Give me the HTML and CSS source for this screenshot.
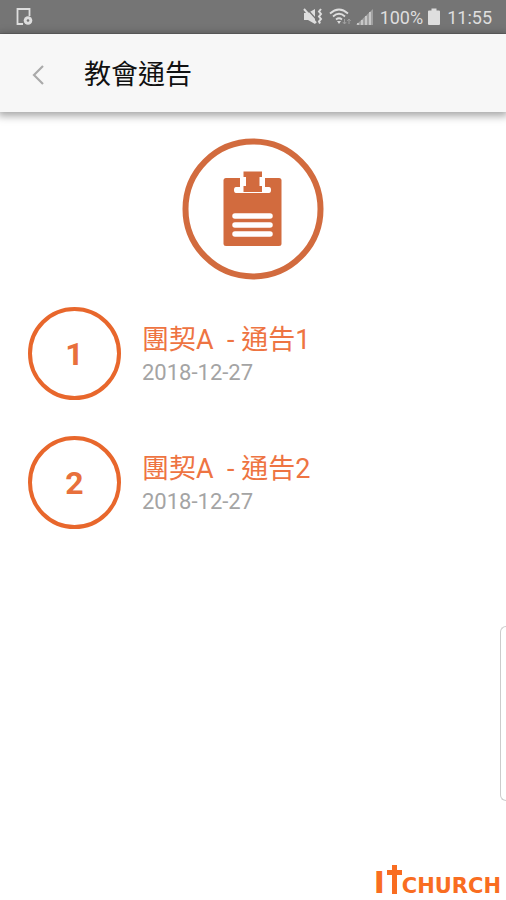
FILE: index.html
```html
<!DOCTYPE html>
<html lang="zh-Hant">
	<head>
		<meta charset="utf-8">
		<meta name="viewport" content="width=device-width, initial-scale=1">
		<title>教會通告</title>
		<link rel="stylesheet" href="styles.css">
	</head>
	<body>
		<div class="status">
			<svg class="status-note" width="18" height="18" viewBox="0 0 18 18">
				<path d="M7 16H1.500V1H13.500V8" fill="none" stroke="currentColor" stroke-width="1.800"/>
				<circle cx="12" cy="12.500" r="4.300" fill="currentColor"/>
				<circle cx="12" cy="12.500" r="1.300" fill="#757575"/>
			</svg>
			<svg width="20" height="18" viewBox="0 0 20 18">
				<path d="M1 5h4l7-4v15l-7-4H1z" fill="currentColor"/>
				<path d="M4 1l10 11" stroke="#757575" stroke-width="1.200"/>
				<path d="M1 1l12 14" stroke="currentColor" stroke-width="2"/>
				<path d="M18 1l-2 2.500 2 2.500-2 2.500 2 2.500-2 2.500 1 2" fill="none" stroke="currentColor" stroke-width="2"/>
			</svg>
			<svg class="status-wifi" width="23" height="18" viewBox="0 0 23 18">
				<path d="M1 5.500Q10 -2.500 19 5.500M4 8.500Q10 3 16 8.500M7 11.500Q10 9 13 11.500" fill="none" stroke="currentColor" stroke-width="1.800"/>
				<path d="M8 13h4l-2 3z" fill="currentColor"/>
				<path d="M15.500 11v5M13.800 14l1.700 2 1.700-2M20 16v-5M18.300 13l1.700-2 1.700 2" fill="none" stroke="#a0a0a0" stroke-width="1"/>
			</svg>
			<svg width="17" height="18" viewBox="0 0 17 18">
				<path d="M0 17L17 1V17z" fill="#a0a0a0"/>
				<path d="M2 17v-2M6 17v-5M10 17v-9M14 17V4" stroke="#c8c8c8" stroke-width="2"/>
			</svg>
			<span class="status-text battery-text">100%</span>
			<svg width="12" height="18" viewBox="0 0 12 18">
				<path d="M3.500 0.500h5v2H11q1 0 1 1V16q0 1-1 1H1q-1 0-1-1V3.500q0-1 1-1h2.500z" fill="currentColor"/>
			</svg>
			<span class="status-text time">11:55</span>
		</div>
		<header class="header">
			<button class="back" type="button" aria-label="返回">
				<svg width="12" height="20" viewBox="0 0 12 20">
					<path d="M11 1L2 10l9 9" fill="none" stroke="#aaa" stroke-width="2.200"/>
				</svg>
			</button>
			<h1 class="title">教會通告</h1>
		</header>
		<main class="main">
			<svg class="board" width="142" height="142" viewBox="0 0 142 142">
				<circle cx="71" cy="71" r="67.500" fill="#fff" stroke="#d26b3e" stroke-width="6"/>
				<rect x="41.500" y="40" width="58" height="68" rx="2.500" fill="#d26b3e"/>
				<path d="M58 38V49H54q-2 0-2 3t2 3H87q2 0 2-3t-2-3H83V38z" fill="#fff"/>
				<path d="M61.500 33.500H80V39H77.500V48H80V54H61.500V48H64V39H61.500z" fill="#d26b3e"/>
				<path d="M53 78H88M53 87H88M53 96H88" stroke="#fff" stroke-width="5.500" stroke-linecap="round"/>
			</svg>
			<ul class="list">
				<li class="item">
					<div class="num">1</div>
					<div class="info">
						<a class="name" href="#">團契A&nbsp; - 通告1</a>
						<p class="date">2018-12-27</p>
					</div>
				</li>
				<li class="item">
					<div class="num">2</div>
					<div class="info">
						<a class="name" href="#">團契A&nbsp; - 通告2</a>
						<p class="date">2018-12-27</p>
					</div>
				</li>
			</ul>
		</main>
		<!-- 右側抽屜 -->
		<div class="drawer"></div>
		<footer class="footer">
			<span class="logo-i">I</span>
			<svg width="15" height="29" viewBox="0 0 15 29">
				<path d="M5 0h5v5h5v5h-5v19H5V10H0V5h5z" fill="#f96d21"/>
			</svg>
			<span class="logo-text">CHURCH</span>
		</footer>
	</body>
</html>
```
FILE: styles.css
```css
*{
	margin: 0;
	padding: 0;
	box-sizing: border-box;
}
body{
	min-height: 100vh;
	display: flex;
	flex-direction: column;
	background: #fff;
	font-family: Roboto, "Noto Sans CJK TC", sans-serif;
}
.status{
	height: 34px;
	padding: 0 14px 0 16px;
	display: flex;
	align-items: center;
	background: #757575;
	border-bottom: 1px solid #666;
	color: #dedede;
}
.status-note{
	margin-right: auto;
}
.status-wifi{
	margin: 0 4px 0 6px;
}
.status-text{
	padding-top: 2px;
	font-size: 18px;
	line-height: 32px;
}
.battery-text{
	margin: 0 5px 0 7px;
}
.time{
	margin-left: 7px;
}
.header{
	height: 78px;
	padding: 4px 24px 0;
	display: flex;
	align-items: center;
	background: #f7f7f7;
	box-shadow: 0 2px 8px 2px rgba(0,0,0,0.35);
}
.back{
	width: 28px;
	height: 48px;
	display: flex;
	align-items: center;
	justify-content: center;
	border: none;
	background: none;
	cursor: pointer;
}
.title{
	margin-left: 32px;
	font-size: 27px;
	font-weight: 400;
	line-height: 36px;
	color: #111;
}
.main{
	flex: 1;
	padding: 26px 28px;
}
.board{
	display: block;
	margin: 0 auto 27px;
}
.list{
	list-style: none;
}
.item{
	display: flex;
	align-items: center;
	margin-bottom: 36px;
}
.num{
	width: 93px;
	height: 93px;
	flex: none;
	border: 4px solid #e8672c;
	border-radius: 50%;
	text-align: center;
	font-size: 32px;
	font-weight: 700;
	line-height: 86px;
	color: #e8703c;
}
.info{
	margin-left: 21px;
}
.name{
	display: block;
	padding-top: 2px;
	font-size: 27px;
	font-weight: 400;
	line-height: 36px;
	text-decoration: none;
	color: #ee7442;
}
.date{
	font-size: 22px;
	font-weight: 400;
	line-height: 30px;
	color: #a4a4a4;
}
.drawer{
	position: fixed;
	right: 0;
	bottom: 99px;
	width: 6px;
	height: 175px;
	border: 1px solid #ccc;
	border-right: none;
	border-radius: 6px 0 0 6px;
	background: #fff;
}
.footer{
	padding: 0 5px 6px 0;
	display: flex;
	justify-content: flex-end;
	align-items: flex-end;
	font-family: "DejaVu Sans", sans-serif;
	font-weight: 700;
	color: #f96d21;
}
.logo-i{
	margin-right: 2px;
	font-size: 30px;
	line-height: 22px;
}
.logo-text{
	font-size: 21px;
	line-height: 16px;
}
```
